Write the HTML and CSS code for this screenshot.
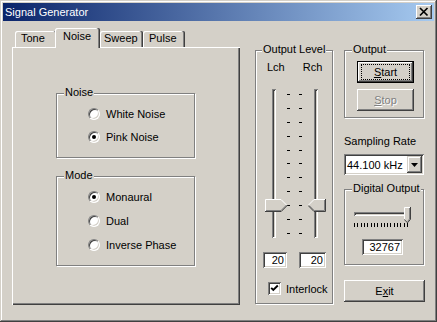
FILE: index.html
```html
<!DOCTYPE html>
<html>
<head>
<meta charset="utf-8">
<link rel="stylesheet" href="styles.css">
</head>
<body>
<div class="window">
  <div class="titlebar">
    <span class="title">Signal Generator</span>
    <div class="close"><svg width="16" height="14" viewBox="0 0 16 14"><path d="M4 3 L11.5 10.5 M11.5 3 L4 10.5" stroke="#000" stroke-width="1.7" fill="none"/></svg></div>
  </div>
  <div class="body">
    <div class="tabctl">
      <div class="tabs">
        <div class="tab t-tone">Tone</div>
        <div class="tab sel t-noise">Noise</div>
        <div class="tab t-sweep">Sweep</div>
        <div class="tab t-pulse">Pulse</div>
      </div>
      <div class="panel">
        <div class="group g-noise">
          <span class="glabel">Noise</span>
          <div class="radio"><span class="rb"></span>White Noise</div>
          <div class="radio"><span class="rb on"></span>Pink Noise</div>
        </div>
        <div class="group g-mode">
          <span class="glabel">Mode</span>
          <div class="radio r24"><span class="rb on"></span>Monaural</div>
          <div class="radio r24"><span class="rb"></span>Dual</div>
          <div class="radio r24"><span class="rb"></span>Inverse Phase</div>
        </div>
      </div>
    </div>

    <div class="group g-level">
      <span class="glabel gl6">Output Level</span>
      <div class="chrow"><span class="lch">Lch</span><span class="rch">Rch</span></div>
      <div class="sliders">
        <div class="vtrack vl">
          <div class="chan-v"></div>
          <svg class="thumb-v" width="23" height="13" viewBox="0 0 23 13">
            <polygon points="0,0 16,0 22,6 16,12 0,12" fill="#d4d0c8"/>
            <polyline points="0.5,12 0.5,0.5 16,0.5 21.5,6" fill="none" stroke="#fff"/>
            <polyline points="1,11.5 16,11.5 21.5,6" fill="none" stroke="#808080"/>
            <polyline points="0,12.5 16.2,12.5 22.5,6.2" fill="none" stroke="#404040"/>
          </svg>
        </div>
        <div class="vticks"><i></i><i></i><i></i><i></i><i></i><i></i><i></i><i></i><i></i><i></i><i></i></div>
        <div class="vticks vt2"><i></i><i></i><i></i><i></i><i></i><i></i><i></i><i></i><i></i><i></i><i></i></div>
        <div class="vtrack vr">
          <div class="chan-v"></div>
          <svg class="thumb-v" width="18" height="13" viewBox="0 0 18 13">
            <polygon points="0,6 6,0 17,0 17,12 6,12" fill="#d4d0c8"/>
            <polyline points="0.5,6 6,0.5 17,0.5" fill="none" stroke="#fff"/>
            <polyline points="1.2,6.5 6.2,11.5 16.5,11.5 16.5,1" fill="none" stroke="#808080"/>
            <polyline points="0.3,6.7 6,12.5 17.5,12.5 17.5,0" fill="none" stroke="#404040"/>
          </svg>
        </div>
      </div>
      <div class="editrow">
        <div class="edit e1">20</div>
        <div class="edit e2">20</div>
      </div>
      <div class="checkrow">
        <span class="cb"><svg width="13" height="13" viewBox="0 0 13 13"><polyline points="3.2,5.8 5.3,8 9.8,3.5" fill="none" stroke="#000" stroke-width="1.9"/></svg></span>
        <span>Interlock</span>
      </div>
    </div>

    <div class="rightcol">
      <div class="group g-output">
        <span class="glabel">Output</span>
        <div class="btn default start"><span class="focus"><u>S</u>tart</span></div>
        <div class="btn stop disabled"><span><u>S</u>top</span></div>
      </div>
      <div class="srlabel">Sampling Rate</div>
      <div class="combo">
        <span class="combotext">44.100 kHz</span>
        <span class="dropbtn"><svg width="7" height="4" viewBox="0 0 7 4"><polygon points="0,0 7,0 3.5,4" fill="#000"/></svg></span>
      </div>
      <div class="group g-digital">
        <span class="glabel">Digital Output</span>
        <div class="htrack">
          <div class="chan-h"></div>
          <svg class="thumb-h" width="7" height="16" viewBox="0 0 7 16">
            <polygon points="0,0 7,0 7,12 3.5,15.5 0,12" fill="#d4d0c8"/>
            <polyline points="0.5,12 0.5,0.5 6,0.5" fill="none" stroke="#fff"/>
            <polyline points="5.5,1 5.5,12 3.5,14.5" fill="none" stroke="#808080"/>
            <polyline points="6.5,0 6.5,12.3 3.5,15.8 0.3,12.5" fill="none" stroke="#404040"/>
          </svg>
        </div>
        <div class="hticks"><i></i><i></i><i></i><i></i><i></i><i></i><i></i><i></i><i></i><i></i><i></i><i></i><i></i><i></i><i></i><i></i><i></i></div>
        <div class="edit e3">32767</div>
      </div>
      <div class="btn exit"><span>E<u>x</u>it</span></div>
    </div>
  </div>
</div>
</body>
</html>
```

FILE: styles.css
```css
* { box-sizing: border-box; }
html, body { margin: 0; padding: 0; }
body {
  font-family: "Liberation Sans", Arial, sans-serif;
  font-size: 11px;
  color: #000;
  background: #d4d0c8;
}
.window {
  width: 437px;
  height: 322px;
  padding: 3px;
  background: #d4d0c8;
  box-shadow: inset -1px -1px #404040, inset 1px 1px #d4d0c8, inset -2px -2px #808080, inset 2px 2px #fff;
}
.titlebar {
  height: 18px;
  display: flex;
  align-items: center;
  justify-content: space-between;
  padding: 0 2px;
  background: linear-gradient(to right, #0a246a, #a6caf0);
}
.title { color: #fff; line-height: 18px; }
.close {
  width: 16px;
  height: 14px;
  background: #d4d0c8;
  box-shadow: inset -1px -1px #404040, inset 1px 1px #fff, inset -2px -2px #808080;
}
.close svg { display: block; }

.body {
  display: flex;
  align-items: flex-start;
  padding-left: 9px;
}

/* tabs */
.tabctl { width: 228px; }
.tabs {
  height: 26px;
  display: flex;
  align-items: flex-end;
  padding-left: 3px;
  position: relative;
  z-index: 1;
}
.tab {
  height: 16px;
  line-height: 12px;
  padding-top: 1px;
  background: #d4d0c8;
  border-radius: 2px 2px 0 0;
  box-shadow: inset -1px 0 #404040, inset -2px 0 #808080, inset 1px 1px #fff;
}
.t-tone { width: 42px; padding-left: 6px; }
.t-noise { width: 45px; padding-left: 8px; }
.t-sweep { width: 43px; padding-left: 4px; }
.t-pulse { width: 42px; padding-left: 6px; }
.tab.sel {
  height: 20px;
  margin-left: -2px;
  margin-bottom: -1px;
  padding-top: 2px;
  position: relative;
  z-index: 2;
}
.panel {
  height: 258px;
  padding: 46px 0 0 44px;
  box-shadow: inset 1px 1px #fff, inset -1px -1px #404040, inset -2px -2px #808080;
}

/* group boxes */
.group {
  position: relative;
  border: 1px solid #808080;
  box-shadow: 1px 1px 0 #fff, inset 1px 1px 0 #fff;
}
.glabel {
  position: absolute;
  top: -8px;
  left: 7px;
  padding: 0 1px;
  line-height: 13px;
  background: #d4d0c8;
}
.gl6 { left: 6px; }
.g-noise { width: 139px; height: 65px; padding-top: 8px; }
.g-mode { width: 139px; height: 90px; margin-top: 18px; padding-top: 8px; }

.radio {
  display: flex;
  align-items: center;
  gap: 6px;
  height: 23px;
  padding-left: 31px;
}
.radio.r24 { height: 24px; }
.rb {
  position: relative;
  width: 12px;
  height: 12px;
  border-radius: 50%;
  background: #fff;
  border: 1px solid;
  border-color: #808080 #fff #fff #808080;
  box-shadow: inset 1px 1px #404040, inset -1px -1px #d4d0c8;
}
.rb.on::after {
  content: "";
  position: absolute;
  left: 3px;
  top: 3px;
  width: 4px;
  height: 4px;
  border-radius: 50%;
  background: #000;
}

/* output level */
.g-level {
  width: 78px;
  height: 254px;
  margin-left: 15px;
  margin-top: 29px;
  padding-top: 10px;
}
.chrow { display: flex; line-height: 12px; }
.lch { margin-left: 11px; }
.rch { margin-left: 18px; }
.sliders {
  display: flex;
  margin-top: 16px;
  margin-left: 9px;
}
.vtrack { position: relative; height: 149px; }
.vl { width: 22px; padding-left: 7px; }
.vr { width: 24px; padding-left: 12px; }
.chan-v {
  width: 4px;
  height: 149px;
  box-shadow: inset 1px 1px #808080, inset -1px -1px #fff, inset 2px 2px #404040, inset -2px -2px #d4d0c8;
}
.thumb-v { position: absolute; top: 110px; left: 0; display: block; }
.vr .thumb-v { left: 6px; }
.vticks {
  width: 3px;
  height: 140px;
  margin-top: 5px;
  display: flex;
  flex-direction: column;
  justify-content: space-between;
}
.vticks i { display: block; height: 1px; background: #000; }
.vt2 { margin-left: 9px; }

.edit {
  height: 16px;
  background: #fff;
  text-align: right;
  line-height: 16px;
  padding-right: 3px;
  box-shadow: inset 1px 1px #808080, inset -1px -1px #fff, inset 2px 2px #404040, inset -2px -2px #d4d0c8;
}
.editrow { display: flex; margin-top: 14px; }
.e1 { width: 24px; margin-left: 7px; }
.e2 { width: 27px; margin-left: 12px; }
.checkrow {
  display: flex;
  align-items: center;
  gap: 5px;
  margin-top: 14px;
  margin-left: 12px;
  height: 13px;
}
.cb {
  width: 13px;
  height: 13px;
  background: #fff;
  box-shadow: inset 1px 1px #808080, inset -1px -1px #fff, inset 2px 2px #404040, inset -2px -2px #d4d0c8;
}
.cb svg { display: block; }

/* right column */
.rightcol { width: 81px; margin-left: 11px; }
.g-output {
  width: 80px;
  height: 68px;
  margin-top: 29px;
  padding-top: 10px;
}
.btn {
  display: flex;
  align-items: center;
  justify-content: center;
  height: 22px;
  background: #d4d0c8;
  box-shadow: inset -1px -1px #404040, inset 1px 1px #fff, inset -2px -2px #808080;
}
.btn u { text-decoration: underline; text-underline-offset: 1px; }
.start, .stop { width: 57px; margin-left: 12px; }
.btn.default {
  border: 1px solid #000;
}
.focus {
  display: flex;
  align-items: center;
  justify-content: center;
  width: 47px;
  height: 14px;
  outline: 1px dotted #000;
}
.stop { margin-top: 6px; }
.disabled { color: #808080; text-shadow: 1px 1px 0 #fff; }
.srlabel { margin-top: 17px; line-height: 12px; }
.combo {
  display: flex;
  align-items: center;
  justify-content: space-between;
  width: 80px;
  height: 21px;
  margin-top: 7px;
  padding: 2px 2px 2px 3px;
  background: #fff;
  box-shadow: inset 1px 1px #808080, inset -1px -1px #fff, inset 2px 2px #404040, inset -2px -2px #d4d0c8;
}
.dropbtn {
  display: flex;
  align-items: center;
  justify-content: center;
  width: 15px;
  height: 17px;
  background: #d4d0c8;
  box-shadow: inset -1px -1px #404040, inset 1px 1px #d4d0c8, inset -2px -2px #808080, inset 2px 2px #fff;
}
.dropbtn svg { display: block; }
.g-digital {
  width: 80px;
  height: 76px;
  margin-top: 14px;
  padding-top: 17px;
}
.htrack {
  position: relative;
  width: 55px;
  height: 16px;
  margin-left: 9px;
  padding-top: 5px;
}
.chan-h {
  width: 55px;
  height: 4px;
  box-shadow: inset 1px 1px #808080, inset -1px -1px #fff, inset 2px 2px #404040, inset -2px -2px #d4d0c8;
}
.thumb-h { position: absolute; left: 50px; top: 0; display: block; }
.hticks {
  display: flex;
  justify-content: space-between;
  width: 54px;
  height: 4px;
  margin-left: 9px;
}
.hticks i { display: block; width: 1px; background: #000; }
.e3 { width: 41px; margin-left: 17px; margin-top: 12px; }
.exit { width: 81px; margin-top: 15px; }
```
